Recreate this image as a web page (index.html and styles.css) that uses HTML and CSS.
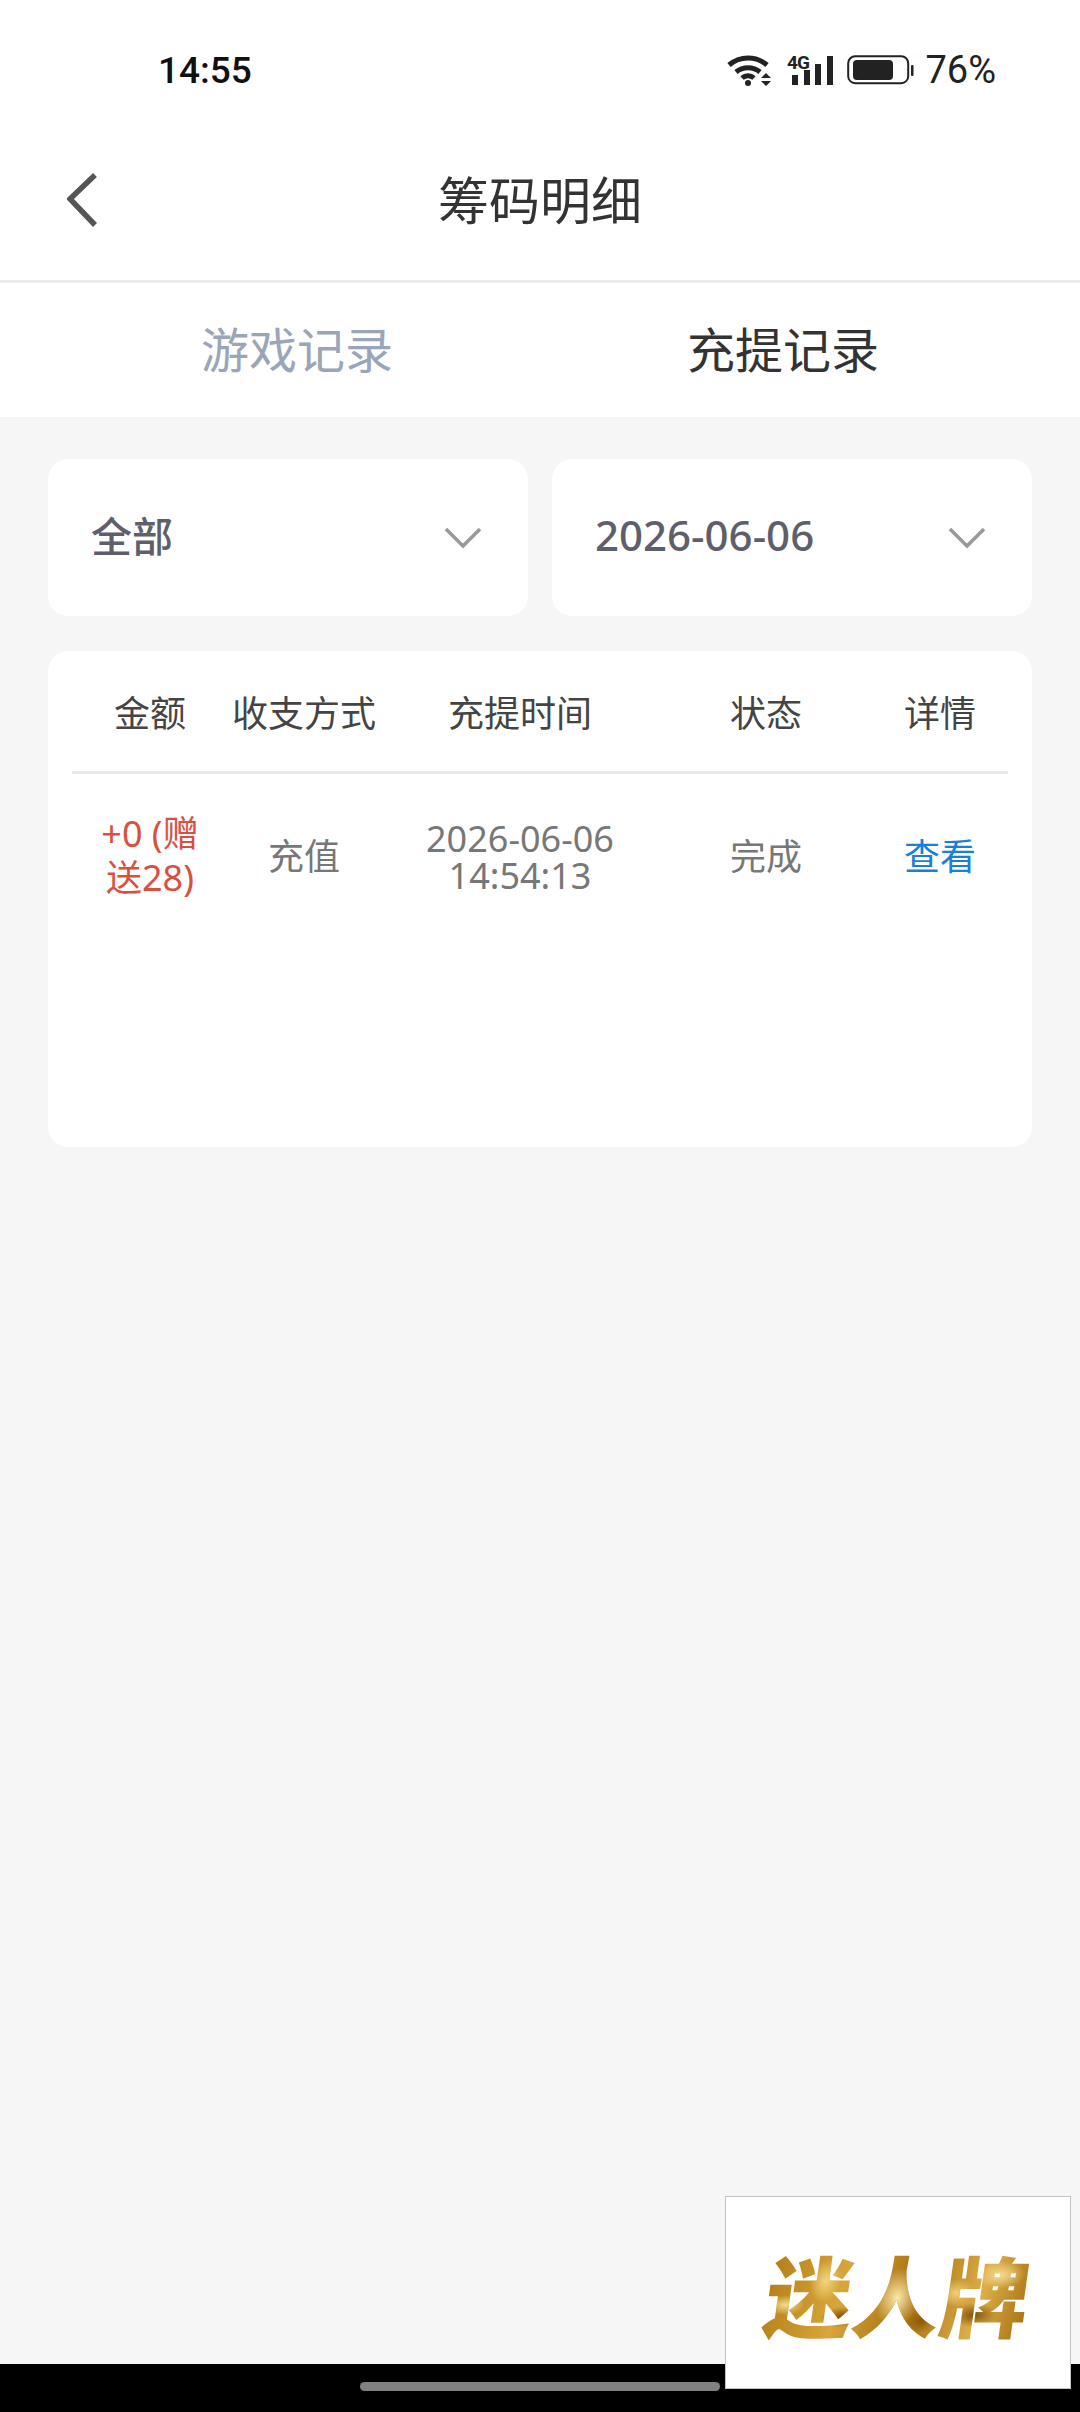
FILE: index.html
```html
<!DOCTYPE html>
<html lang="zh-CN">
<head>
	<meta charset="UTF-8">
	<meta name="viewport" content="width=device-width, initial-scale=1.0">
	<title>筹码明细</title>
	<link rel="stylesheet" href="styles.css">
</head>
<body>
	<div class="page">
		<header class="top">
			<div class="status">
				<span class="clock">14:55</span>
				<div class="status-icons">
					<svg class="ic-wifi" width="46" height="34" viewBox="0 0 46 34">
						<path d="M2 12 A29 29 0 0 1 40 12" fill="none" stroke="#222" stroke-width="5"/>
						<path d="M9 19 A19 19 0 0 1 33 19" fill="none" stroke="#222" stroke-width="5"/>
						<path d="M15 25 A9 9 0 0 1 27 25" fill="none" stroke="#222" stroke-width="5"/>
						<circle cx="21" cy="30" r="3" fill="#222"/>
						<path d="M34 25 L39 20 L44 25 Z M34 28 L44 28 L39 33 Z" fill="#222"/>
					</svg>
					<svg class="ic-signal" width="46" height="43" viewBox="0 -6 46 43">
						<text class="ic-4g" x="0" y="14" textLength="23">4G</text>
						<rect x="5" y="20" width="6" height="10" fill="#222"/>
						<rect x="17" y="15" width="6" height="15" fill="#222"/>
						<rect x="28" y="9" width="6" height="21" fill="#222"/>
						<rect x="40" y="1" width="6" height="29" fill="#222"/>
					</svg>
					<svg class="ic-battery" width="67" height="31" viewBox="0 0 67 31">
						<rect x="1.2" y="1.2" width="60" height="27" rx="7" fill="none" stroke="#222" stroke-width="2"/>
						<rect x="6" y="5" width="40" height="20" rx="4" fill="#222"/>
						<rect x="64" y="10" width="2.5" height="11" rx="1" fill="#222"/>
					</svg>
					<span class="percent">76%</span>
				</div>
			</div>
			<div class="nav">
				<svg class="back" width="32" height="56" viewBox="0 0 32 56">
					<path d="M28 3 L3 27 L28 53" fill="none" stroke="#555" stroke-width="5.5"/>
				</svg>
				<h1 class="title">筹码明细</h1>
			</div>
		</header>

		<div class="tabs">
			<span class="tab">游戏记录</span>
			<span class="tab active">充提记录</span>
		</div>

		<main class="content">
			<div class="filters">
				<div class="filter">
					<span>全部</span>
					<svg width="38" height="22" viewBox="0 0 38 22"><path d="M2 2 L19 19 L36 2" fill="none" stroke="#999" stroke-width="3.5"/></svg>
				</div>
				<div class="filter">
					<span class="filter-date">2026-06-06</span>
					<svg width="38" height="22" viewBox="0 0 38 22"><path d="M2 2 L19 19 L36 2" fill="none" stroke="#999" stroke-width="3.5"/></svg>
				</div>
			</div>

			<div class="card">
				<table class="records">
					<colgroup>
						<col class="c-amount">
						<col class="c-type">
						<col class="c-time">
						<col class="c-state">
						<col class="c-more">
					</colgroup>
					<thead>
						<tr>
							<th>金额</th>
							<th>收支方式</th>
							<th>充提时间</th>
							<th>状态</th>
							<th>详情</th>
						</tr>
					</thead>
					<tbody>
						<tr>
							<td class="amount">+0 (赠送28)</td>
							<td>充值</td>
							<td class="time">2026-06-06 14:54:13</td>
							<td>完成</td>
							<td class="more">查看</td>
						</tr>
					</tbody>
				</table>
			</div>
		</main>

		<footer class="navbar"><span class="home-bar"></span></footer>

		<div class="brand"><span class="brand-text">迷人牌</span></div>
	</div>
</body>
</html>
```

FILE: styles.css
```css
* { box-sizing: border-box; }

body {
	margin     : 0;
	font-family: "Noto Sans", "Noto Sans CJK SC", sans-serif;
	background : #f6f6f6;
}

.page {
	position      : relative;
	display       : flex;
	flex-direction: column;
	width         : 1080px;
	height        : 2412px;
	overflow      : hidden;
}

.top {
	height       : 283px;
	background   : #fff;
	border-bottom: 3px solid #ececec;
}

.status {
	display        : flex;
	justify-content: space-between;
	align-items    : center;
	height         : 140px;
	padding        : 0 84px 0 158px;
}

.clock {
	font-family: Roboto, sans-serif;
	font-size  : 37px;
	font-weight: 500;
	color      : #111;
}

.status-icons {
	display    : flex;
	align-items: center;
	gap        : 14px;
}

.ic-4g {
	font-family: Roboto, sans-serif;
	font-size  : 19px;
	font-weight: 700;
	fill       : #222;
}

.percent {
	font-family: Roboto, sans-serif;
	font-size  : 38px;
	margin-left: -3px;
	color      : #222;
}

.nav {
	display    : flex;
	align-items: center;
	height     : 120px;
	padding    : 0 0 0 67px;
}

.back { display: block; }

.title {
	flex       : 1;
	margin     : 0 99px 0 0;
	text-align : center;
	font-size  : 51px;
	font-weight: 400;
	line-height: 60px;
	color      : #333;
}

.tabs {
	display    : flex;
	align-items: center;
	height     : 134px;
	padding    : 0 54px 6px;
	background : #fff;
}

.tab {
	flex      : 1;
	text-align: center;
	font-size : 48px;
	color     : #9aa5b8;
}

.tab.active { color: #333; }

.content {
	flex   : 1;
	padding: 42px 48px 0;
}

.filters {
	display: flex;
	gap    : 24px;
}

.filter {
	flex           : 1;
	display        : flex;
	align-items    : center;
	justify-content: space-between;
	height         : 157px;
	padding        : 0 46px 0 43px;
	border-radius  : 20px;
	background     : #fff;
	font-size      : 41px;
	font-weight    : 500;
	color          : #5f5f6b;
}

.filter > span { padding-bottom: 7px; }

.filter-date { font-size: 42px; }

.card {
	height       : 496px;
	margin-top   : 35px;
	padding      : 0 24px;
	border-radius: 20px;
	background   : #fff;
}

.records {
	width          : 100%;
	table-layout   : fixed;
	border-collapse: collapse;
	font-size      : 36px;
	text-align     : center;
}

.c-amount { width: 156px; }
.c-type   { width: 152px; }
.c-time   { width: 280px; }
.c-state  { width: 212px; }
.c-more   { width: 136px; }

th {
	height       : 121px;
	padding      : 2px 0 0;
	border-bottom: 3px solid #e8e8e8;
	font-weight  : 400;
	color        : #444;
}

td {
	height : 170px;
	padding: 0 20px 7px;
	color  : #777;
}

.amount {
	padding    : 0 22px 4px;
	line-height: 44px;
	color      : #d9503f;
}

.time {
	padding-bottom: 2px;
	line-height   : 37px;
}

.more { color: #1a7fd6; }

.navbar {
	display        : flex;
	justify-content: center;
	align-items    : flex-start;
	height         : 48px;
	padding-top    : 18px;
	background     : #000;
}

.home-bar {
	width        : 360px;
	height       : 9px;
	border-radius: 5px;
	background   : #808080;
}

/* floats over the bottom right corner */
.brand {
	position       : absolute;
	left           : 725px;
	top            : 2196px;
	display        : flex;
	align-items    : center;
	justify-content: center;
	width          : 346px;
	height         : 193px;
	border         : 1px solid #c4c4c4;
	background     : #fff;
}

.brand-text {
	display        : block;
	transform      : skewX(-8deg);
	font-family    : "Noto Sans CJK SC", sans-serif;
	font-size      : 88px;
	line-height    : 100px;
	font-weight    : 900;
	background     :
		radial-gradient(ellipse 20px 10px at 8% 62%, #f5dc8e, transparent),
		radial-gradient(ellipse 16px 22px at 22% 38%, #f3d67f, transparent),
		radial-gradient(ellipse 22px 30px at 50% 55%, #fbe9ad, transparent),
		radial-gradient(ellipse 24px 14px at 88% 32%, #f6dc92, transparent),
		radial-gradient(ellipse 18px 14px at 72% 50%, #f0cf78, transparent),
		radial-gradient(ellipse 22px 10px at 30% 74%, #7d4f06, transparent),
		radial-gradient(ellipse 14px 12px at 60% 78%, #8a5a0a, transparent),
		radial-gradient(ellipse 22px 12px at 80% 72%, #7f5008, transparent),
		radial-gradient(ellipse 16px 10px at 40% 35%, #96650f, transparent),
		linear-gradient(100deg, #b27c14, #d8a63a 30%, #a8700f 55%, #dcae48 80%, #a66e10);
	-webkit-background-clip: text;
	background-clip: text;
	color          : transparent;
}
```
